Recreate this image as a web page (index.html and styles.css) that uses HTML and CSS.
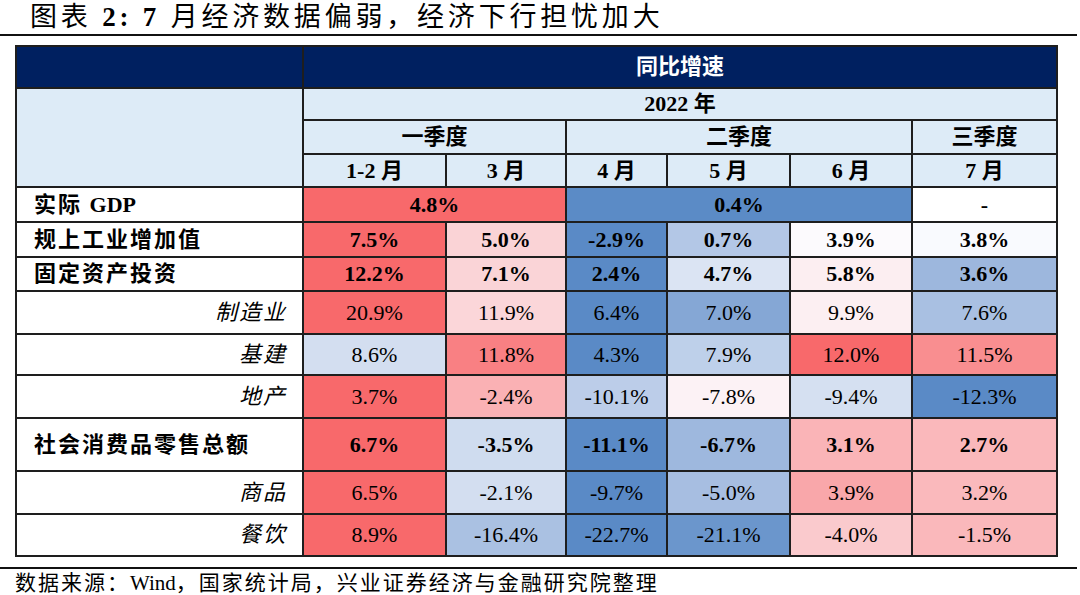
FILE: index.html
```html
<!DOCTYPE html>
<html lang="zh-CN">
<head>
<meta charset="utf-8">
<title>图表 2</title>
<link rel="stylesheet" href="styles.css">
</head>
<body>
<div class="page">
  <h1 class="title">图表 <span class="lat">2:</span> <span class="lat">7</span> 月经济数据偏弱，经济下行担忧加大</h1>
  <table class="grid">
    <colgroup>
      <col class="c-label"><col class="c-m12"><col class="c-m3"><col class="c-m4"><col class="c-m5"><col class="c-m6"><col class="c-m7">
    </colgroup>
    <thead>
      <tr class="r-top"><th class="dark"></th><th class="dark" colspan="6">同比增速</th></tr>
      <tr class="r-year"><th class="light" rowspan="3"></th><th class="light" colspan="6">2022 年</th></tr>
      <tr class="r-quarter"><th class="light" colspan="2">一季度</th><th class="light" colspan="3">二季度</th><th class="light">三季度</th></tr>
      <tr class="r-month"><th class="light">1-2 月</th><th class="light">3 月</th><th class="light">4 月</th><th class="light">5 月</th><th class="light">6 月</th><th class="light">7 月</th></tr>
    </thead>
    <tbody>
      <tr class="r-main r-gdp">
        <td class="lab-main">实际 <span class="latin">GDP</span></td>
        <td colspan="2" style="background:#F8696B">4.8%</td>
        <td colspan="3" style="background:#5B8BC6">0.4%</td>
        <td style="background:#FFFFFF">-</td>
      </tr>
      <tr class="r-main r-ind">
        <td class="lab-main">规上工业增加值</td>
        <td style="background:#F8696B">7.5%</td>
        <td style="background:#FAD3D6">5.0%</td>
        <td style="background:#5A8AC6">-2.9%</td>
        <td style="background:#B3C7E6">0.7%</td>
        <td style="background:#FCFAFD">3.9%</td>
        <td style="background:#F9FAFE">3.8%</td>
      </tr>
      <tr class="r-main r-fai">
        <td class="lab-main">固定资产投资</td>
        <td style="background:#F8696B">12.2%</td>
        <td style="background:#FAD4D7">7.1%</td>
        <td style="background:#5A8AC6">2.4%</td>
        <td style="background:#DBE4F3">4.7%</td>
        <td style="background:#FCEEF1">5.8%</td>
        <td style="background:#9DB7DD">3.6%</td>
      </tr>
      <tr class="r-sub r-h43">
        <td class="lab-sub">制造业</td>
        <td style="background:#F8696B">20.9%</td>
        <td style="background:#FBD6D9">11.9%</td>
        <td style="background:#5A8AC6">6.4%</td>
        <td style="background:#85A7D5">7.0%</td>
        <td style="background:#FCEFF2">9.9%</td>
        <td style="background:#A9C0E2">7.6%</td>
      </tr>
      <tr class="r-sub r-h41">
        <td class="lab-sub">基建</td>
        <td style="background:#D3DEF0">8.6%</td>
        <td style="background:#F98083">11.8%</td>
        <td style="background:#5A8AC6">4.3%</td>
        <td style="background:#BED0EA">7.9%</td>
        <td style="background:#F8696B">12.0%</td>
        <td style="background:#F98E90">11.5%</td>
      </tr>
      <tr class="r-sub r-h43">
        <td class="lab-sub">地产</td>
        <td style="background:#F8696B">3.7%</td>
        <td style="background:#FAB1B4">-2.4%</td>
        <td style="background:#BCCDE9">-10.1%</td>
        <td style="background:#FCF2F5">-7.8%</td>
        <td style="background:#D5E0F1">-9.4%</td>
        <td style="background:#5A8AC6">-12.3%</td>
      </tr>
      <tr class="r-main r-retail">
        <td class="lab-main">社会消费品零售总额</td>
        <td style="background:#F8696B">6.7%</td>
        <td style="background:#CFDCEF">-3.5%</td>
        <td style="background:#5A8AC6">-11.1%</td>
        <td style="background:#9EB8DE">-6.7%</td>
        <td style="background:#FAB4B7">3.1%</td>
        <td style="background:#FAB8BB">2.7%</td>
      </tr>
      <tr class="r-sub r-h43">
        <td class="lab-sub">商品</td>
        <td style="background:#F8696B">6.5%</td>
        <td style="background:#D3DEF0">-2.1%</td>
        <td style="background:#5A8AC6">-9.7%</td>
        <td style="background:#A7BEE1">-5.0%</td>
        <td style="background:#F9A7AA">3.9%</td>
        <td style="background:#FAB9BC">3.2%</td>
      </tr>
      <tr class="r-sub r-h42">
        <td class="lab-sub">餐饮</td>
        <td style="background:#F8696B">8.9%</td>
        <td style="background:#AAC1E2">-16.4%</td>
        <td style="background:#5A8AC6">-22.7%</td>
        <td style="background:#6B96CC">-21.1%</td>
        <td style="background:#FACACD">-4.0%</td>
        <td style="background:#FAB8BB">-1.5%</td>
      </tr>
    </tbody>
  </table>
  <p class="source">数据来源：<span class="latin">Wind</span>，国家统计局，兴业证券经济与金融研究院整理</p>
</div>
</body>
</html>
```

FILE: styles.css
```css
* { box-sizing: border-box; }

html, body {
  margin: 0;
  padding: 0;
  background: #ffffff;
}

body {
  font-family: "Liberation Serif", "Noto Sans CJK SC", serif;
  color: #000000;
}

.page {
  width: 1080px;
  height: 595px;
  overflow: hidden;
}

.title {
  margin: 0;
  width: 1077px;
  height: 36px;
  padding: 1px 0 0 30px;
  border-bottom: 2px solid #111111;
  font-size: 27px;
  line-height: 33px;
  font-weight: 400;
  letter-spacing: 3.8px;
  white-space: nowrap;
}

.title .lat {
  font-weight: 700;
}

.latin {
  letter-spacing: 0;
}

.grid {
  margin: 9px 0 0 15px;
  width: 1041px;
  border-collapse: collapse;
  table-layout: fixed;
  font-size: 22px;
}

.c-label { width: 287px; }
.c-m12 { width: 143px; }
.c-m3 { width: 120px; }
.c-m4 { width: 101px; }
.c-m5 { width: 123px; }
.c-m6 { width: 122px; }
.c-m7 { width: 145px; }

.grid th,
.grid td {
  border: 2px solid #1e1e1e;
  padding: 0;
  text-align: center;
  vertical-align: middle;
  line-height: 1;
  white-space: nowrap;
}

.grid th {
  font-weight: 700;
}

.dark {
  background: #002060;
  color: #ffffff;
}

.light {
  background: #DDEBF7;
}

.r-top { height: 42px; }
.r-year { height: 32px; }
.r-quarter { height: 34px; }
.r-month { height: 33px; }
.r-gdp { height: 35px; }
.r-ind { height: 35px; }
.r-fai { height: 34px; }
.r-h43 { height: 43px; }
.r-h41 { height: 41px; }
.r-h42 { height: 42px; }
.r-retail { height: 53px; }

.r-main td {
  font-weight: 700;
}

.lab-main {
  background: #ffffff;
  text-align: left !important;
  padding-left: 17px !important;
  letter-spacing: 2px;
}

.lab-sub {
  background: #ffffff;
  text-align: right !important;
  padding-right: 15px !important;
  font-style: italic;
  font-weight: 400;
  letter-spacing: 2px;
}

.source {
  margin: 10px 0 0 0;
  width: 1077px;
  height: 28px;
  padding: 2px 0 0 15px;
  border-top: 2px solid #111111;
  font-size: 21px;
  line-height: 24px;
  letter-spacing: 2px;
  white-space: nowrap;
}
```
